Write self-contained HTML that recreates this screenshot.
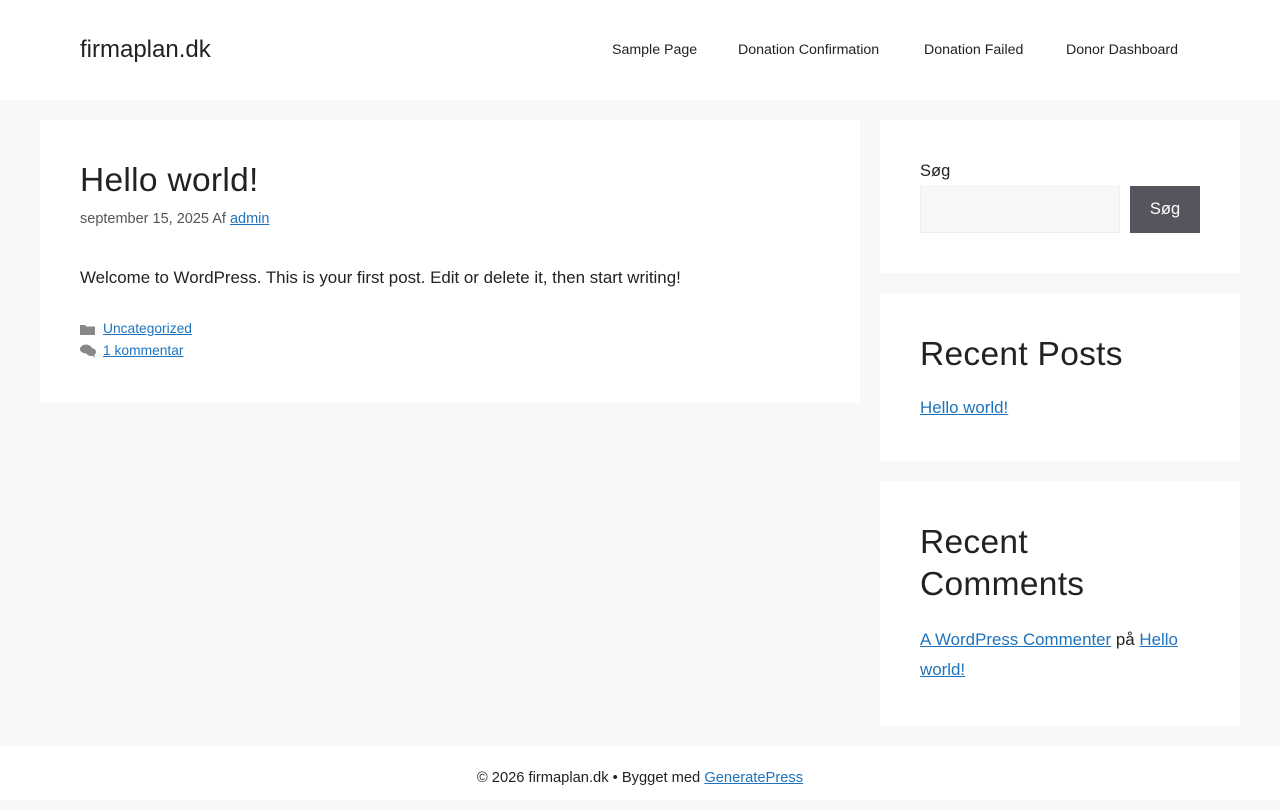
<!DOCTYPE html>
<html><head><meta charset="utf-8"><style>
*{box-sizing:border-box;margin:0;padding:0}
body{width:1280px;height:800px;background:#f7f8f9;font-family:"Liberation Sans",sans-serif;color:#222;font-size:17px;overflow:hidden;position:relative}
a{color:#1e73be;text-decoration:underline}
.hdr{position:absolute;left:0;top:0;width:1280px;height:100px;background:#fff}
.logo{position:absolute;left:80px;top:36px;font-size:24px;color:#222}
.nav{position:absolute;top:42px;font-size:14.2px;color:#222}
.box{position:absolute;background:#fff}
h1{font-weight:400;font-size:33.5px;position:absolute;left:80px;top:162px;letter-spacing:0.3px}
h2{font-weight:400;font-size:33.5px;line-height:42px;letter-spacing:0.3px}
</style></head><body>
<div class="hdr">
<div class="logo">firmaplan.dk</div>
<div class="nav" style="left:612px">Sample Page</div>
<div class="nav" style="left:738px">Donation Confirmation</div>
<div class="nav" style="left:924px">Donation Failed</div>
<div class="nav" style="left:1066px">Donor Dashboard</div>
</div>
<div class="box" style="left:40px;top:120px;width:820px;height:283px"></div>
<h1>Hello world!</h1>
<div style="position:absolute;left:80px;top:211px;font-size:14.5px;color:#555">september 15, 2025 Af <a href="#">admin</a></div>
<div style="position:absolute;left:80px;top:268px;font-size:16.9px">Welcome to WordPress. This is your first post. Edit or delete it, then start writing!</div>
<svg style="position:absolute;left:80px;top:323px" width="15" height="13" viewBox="0 0 15 13"><path d="M0 2h5l1.5 1.5H15V12H0z" fill="#888"/></svg>
<div style="position:absolute;left:103px;top:321px;font-size:13.8px"><a href="#">Uncategorized</a></div>
<svg style="position:absolute;left:80px;top:344px" width="16" height="14" viewBox="0 0 16 14"><ellipse cx="6" cy="5" rx="6" ry="4.5" fill="#888"/><ellipse cx="11" cy="8" rx="5" ry="4" fill="#888"/><path d="M12 11l3 3-1-4z" fill="#888"/></svg>
<div style="position:absolute;left:103px;top:343px;font-size:13.8px"><a href="#">1 kommentar</a></div>

<div class="box" style="left:880px;top:120px;width:360px;height:153px"></div>
<div style="position:absolute;left:920px;top:162px;font-size:16.5px">Søg</div>
<div style="position:absolute;left:920px;top:186px;width:200px;height:47px;background:#f7f8f9;border:1px solid #eee"></div>
<div style="position:absolute;left:1130px;top:186px;width:70px;height:47px;background:#55555e;color:#fff;font-size:16.5px;text-align:center;line-height:47px">Søg</div>

<div class="box" style="left:880px;top:293px;width:360px;height:168px"></div>
<h2 style="position:absolute;left:920px;top:334px">Recent Posts</h2>
<div style="position:absolute;left:920px;top:398px;font-size:16.9px"><a href="#">Hello world!</a></div>

<div class="box" style="left:880px;top:481px;width:360px;height:245px"></div>
<h2 style="position:absolute;left:920px;top:522px">Recent<br>Comments</h2>
<div style="position:absolute;left:920px;top:625px;width:290px;line-height:30px;font-size:16.9px"><a href="#">A WordPress Commenter</a> på <a href="#">Hello world!</a></div>

<div style="position:absolute;left:0;top:746px;width:1280px;height:54px;background:#fff;text-align:center;font-size:14.7px;line-height:64px">© 2026 firmaplan.dk • Bygget med <a href="#">GeneratePress</a></div>
</body></html>
